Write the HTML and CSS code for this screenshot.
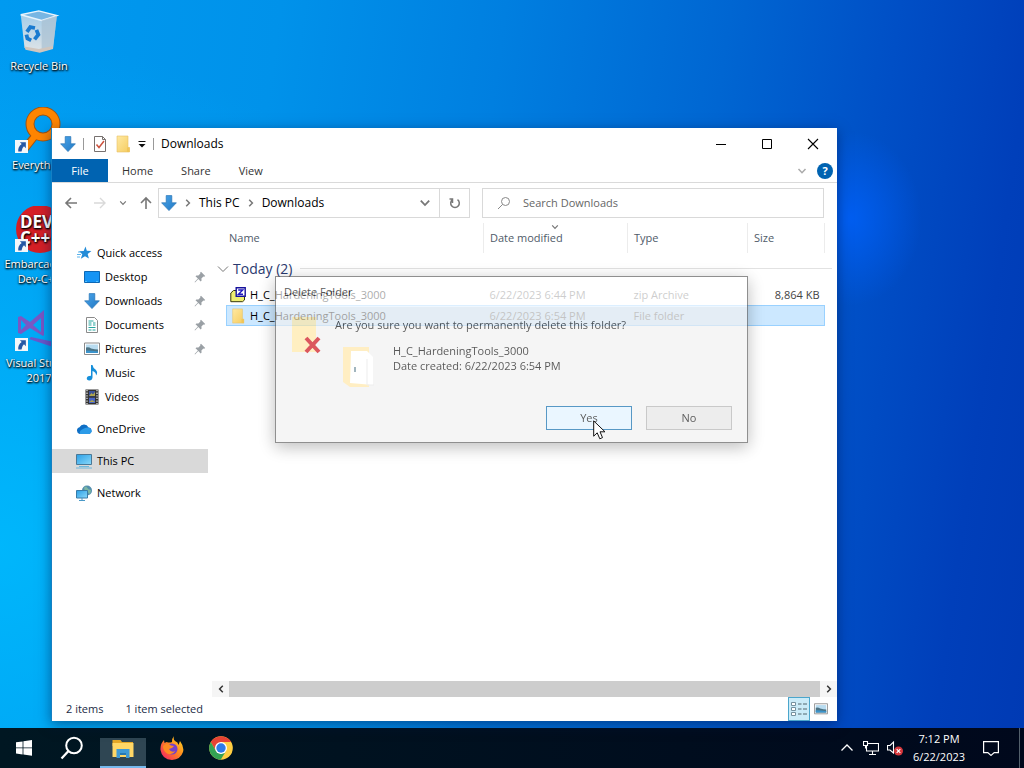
FILE: index.html
```html
<!DOCTYPE html>
<html lang="en">
<head>
<meta charset="utf-8">
<meta name="viewport" content="width=device-width, initial-scale=1">
<title>Downloads</title>
<link rel="stylesheet" href="styles.css">
</head>
<body>
<svg class="defs" aria-hidden="true">
  <defs>
    <linearGradient id="gBlue" x1="0" y1="0" x2="1" y2="1"><stop offset="0" stop-color="#4aa5ea"/><stop offset="1" stop-color="#2178c4"/></linearGradient>
    <linearGradient id="gFold" x1="0" y1="0" x2="1" y2="1"><stop offset="0" stop-color="#ffe9a2"/><stop offset="1" stop-color="#f5cc5f"/></linearGradient>
    <linearGradient id="gBin" x1="0" y1="0" x2="0" y2="1"><stop offset="0" stop-color="#9fcbe9"/><stop offset="1" stop-color="#dde3e7"/></linearGradient>
    <linearGradient id="gScreen" x1="0" y1="0" x2="1" y2="1"><stop offset="0" stop-color="#2b9fe6"/><stop offset="1" stop-color="#8ad9fa"/></linearGradient>
    <linearGradient id="gFox" x1="1" y1="0" x2="0" y2="1"><stop offset="0" stop-color="#ffe226"/><stop offset=".45" stop-color="#ff8a1e"/><stop offset="1" stop-color="#f5156c"/></linearGradient>
  </defs>
  <symbol id="down" viewBox="0 0 16 16"><path d="M5.2.6h5.6v7.2h4.6L8 15.6.6 7.800h4.600z" fill="url(#gBlue)" stroke="#2874b5" stroke-width=".7"/></symbol>
  <symbol id="folder" viewBox="0 0 16 18"><path d="M2 1h11v11.500h1.500V17H2z" fill="url(#gFold)" stroke="#e8c166" stroke-width=".6"/><path d="M12 12.500h2.500V17H12z" fill="#f0c558"/></symbol>
  <symbol id="pin" viewBox="0 0 12 12"><path d="M7 .8 11.200 5l-1 .8-.8-.2-2 2 .2 2-.9.900-2.400-2.400L1 11.500.6 11l3.300-3.400-2.400-2.300.9-.9 2 .2 2-2-.3-.8z" fill="#9aa0a5"/></symbol>
  <symbol id="picture" viewBox="0 0 16 13"><path d="M.5.500h15v11.500H.5z" fill="#fff" stroke="#8b8b8b"/><path d="M2 2h12v8.500H2z" fill="#b9dcf0"/><path d="M2 5q3-1 5 1 4 1 7 1v3.500H2z" fill="#4c7384"/><path d="M2 8q6 0 12 1v1.500H2z" fill="#3b94cc"/></symbol>
  <symbol id="link" viewBox="0 0 12 12"><path d="M0 0h12v12H0z" fill="#f4f7fa"/><path d="M4.500 2H10v5.500L8.300 5.800Q6.200 7.500 6 10.500H3Q2.500 6.500 6.200 3.700z" fill="#2557a5"/></symbol>
  <symbol id="chevron" viewBox="0 0 10 10"><path d="m1.500 3 3.500 3.700L8.500 3" fill="none" stroke="currentColor" stroke-width="1.500"/></symbol>
  <symbol id="right" viewBox="0 0 10 10"><path d="m3.200 1.800 3.200 3.200-3.200 3.200" fill="none" stroke="currentColor" stroke-width="1.500"/></symbol>
</svg>

<div class="screen">
  <main class="desktop">
    <nav class="shortcuts" aria-label="Desktop icons">
      <a class="shortcut" href="#bin">
        <svg class="ico-shortcut" viewBox="0 0 48 48"><g transform="translate(1 1) scale(.95)"><path d="M5 6 24 2l19 5-4 34q-8 4-15 3L9 41z" fill="url(#gBin)"/><path d="m5 6 19-4 19 5-16 5z" fill="#77b6e3" stroke="#e7f4fd" stroke-width="1.500"/><path d="m27 12 16-5-4 34-12 3z" fill="#a9c0d2" opacity=".7"/><path d="M9 39.500 24 42l15-3v3l-14 4-15-3z" fill="#d0c6be"/><g fill="none" stroke="#1a7bd0" stroke-width="4"><path d="m11.500 24 3.500-5 5 1"/><path d="m21.500 22 2 5-4 5"/><path d="m16 33-4-2-1-4"/></g></g></svg>
        <span>Recycle Bin</span>
      </a>
      <a class="shortcut" href="#everything">
        <svg class="ico-shortcut" viewBox="0 0 48 48"><path d="M19 30 8 44" stroke="#9d5313" stroke-width="8"/><circle cx="28" cy="17" r="13" fill="none" stroke="#9d5313" stroke-width="9"/><path d="M20 29 9 43" stroke="#ff8500" stroke-width="6"/><circle cx="28" cy="17" r="13" fill="none" stroke="#ff8500" stroke-width="7"/><use href="#link" x="0" y="33" width="13" height="13"/></svg>
        <span>Everything</span>
      </a>
      <a class="shortcut" href="#devcpp">
        <svg class="ico-shortcut" viewBox="0 0 48 48"><circle cx="25" cy="23" r="24" fill="#d51f26"/><text class="dev-mark" x="5" y="22">DEV</text><text class="dev-mark" x="5" y="38">C++</text><use href="#link" x="0" y="33" width="13" height="13"/></svg>
        <span>Embarcadero<br>Dev-C++</span>
      </a>
      <a class="shortcut" href="#vs">
        <svg class="ico-shortcut" viewBox="0 0 48 48"><path d="M29 5 15 17 6 11 3 12v16l3 1 9-6 13 8 1-1zM6 15l5 5-5 5zm20-2v14l-8-7z" fill="#7958c4" fill-rule="evenodd"/><path d="M14 34 44 44v-6L16 32z" fill="#6a57cb"/><use href="#link" x="0" y="33" width="13" height="13"/></svg>
        <span>Visual Studio<br>2017</span>
      </a>
    </nav>

    <section class="window" aria-label="Downloads">
      <header class="titlebar">
        <svg class="ico16"><use href="#down"/></svg>
        <i class="bar"></i>
        <button class="plain" aria-label="Properties"><svg class="ico16" viewBox="0 0 16 16"><path d="M2.500.500h8l3 3v12h-11z" fill="#fff" stroke="#77716f"/><path d="M10.500.500v3h3" fill="none" stroke="#77716f"/><path d="m4.500 8.500 2.500 3 5-6.500" fill="none" stroke="#cc533f" stroke-width="1.500"/></svg></button>
        <button class="plain" aria-label="New folder"><svg class="ico16 tall"><use href="#folder"/></svg></button>
        <button class="plain" aria-label="Customize toolbar"><svg class="ico8" viewBox="0 0 8 8"><path d="M.5 1.500h7" stroke="#111"/><path d="M.5 4h7L4 7.500z" fill="#111"/></svg></button>
        <i class="bar"></i>
        <h1 class="title">Downloads</h1>
        <div class="controls">
          <button class="control" aria-label="Minimize"><svg class="ico12" viewBox="0 0 12 12"><path d="M1 6.500h10" stroke="#000"/></svg></button>
          <button class="control" aria-label="Maximize"><svg class="ico12" viewBox="0 0 12 12"><path d="M1.500 1.500h9v9h-9z" fill="none" stroke="#000"/></svg></button>
          <button class="control" aria-label="Close"><svg class="ico12" viewBox="0 0 12 12"><path d="m1 1 10 10M11 1 1 11" stroke="#000" stroke-width="1.100"/></svg></button>
        </div>
      </header>

      <nav class="ribbon" aria-label="Ribbon">
        <button class="tab file">File</button>
        <button class="tab">Home</button>
        <button class="tab">Share</button>
        <button class="tab">View</button>
        <button class="plain expand" aria-label="Expand ribbon"><svg class="ico10 faint"><use href="#chevron"/></svg></button>
        <button class="help" aria-label="Help">?</button>
      </nav>

      <div class="location">
        <div class="history">
          <button class="plain" aria-label="Back"><svg class="ico14" viewBox="0 0 14 14"><path d="M13 7H2m5-5L2 7l5 5" fill="none" stroke="#777" stroke-width="1.600"/></svg></button>
          <button class="plain" aria-label="Forward" disabled><svg class="ico14" viewBox="0 0 14 14"><path d="M1 7h11M7 2l5 5-5 5" fill="none" stroke="#d9d9d9" stroke-width="1.400"/></svg></button>
          <button class="plain" aria-label="Recent locations"><svg class="ico8 grey"><use href="#chevron"/></svg></button>
          <button class="plain" aria-label="Up"><svg class="ico14" viewBox="0 0 14 14"><path d="M7 13V2M2 7l5-5 5 5" fill="none" stroke="#777" stroke-width="1.600"/></svg></button>
        </div>
        <div class="address">
          <svg class="ico16"><use href="#down"/></svg>
          <svg class="ico10 grey"><use href="#right"/></svg>
          <button class="plain">This PC</button>
          <svg class="ico10 grey"><use href="#right"/></svg>
          <button class="plain">Downloads</button>
          <button class="plain drop" aria-label="Previous locations"><svg class="ico12 grey"><use href="#chevron"/></svg></button>
          <button class="plain refresh" aria-label="Refresh"><svg class="ico14" viewBox="0 0 14 14"><path d="M9.500 3.700a4.300 4.300 0 1 1-5 0M4.500 7V3H1.500" fill="none" stroke="#777" stroke-width="1.500"/></svg></button>
        </div>
        <label class="search">
          <svg class="ico14" viewBox="0 0 14 14"><circle cx="8.500" cy="5.500" r="4" fill="none" stroke="#888"/><path d="m5.500 8.500-4.500 4.500" stroke="#888"/></svg>
          <input type="search" placeholder="Search Downloads" aria-label="Search Downloads">
        </label>
      </div>

      <div class="body">
        <nav class="tree" aria-label="Folders">
          <a class="node top" href="#quick"><svg class="ico16" viewBox="0 0 16 16"><path d="m9.500 1.500 1.300 4.300 4.600.2-3.700 3 1.200 4.600L9 11.200l-4.200 2.600 1.500-4.600L3 6.300l4.700-.4z" fill="#238cd8"/><path d="M1 9.500h4M1 12h3M2 7h2" stroke="#5db4ec"/></svg>Quick access</a>
          <a class="node" href="#desktop"><svg class="ico16" viewBox="0 0 16 16"><path d="M.5 2.500h15v11H.5z" fill="#1694f4" stroke="#0d68b5"/><path d="M1 12.500h14" stroke="#55c2ff" stroke-dasharray="2 9"/></svg>Desktop<svg class="pin"><use href="#pin"/></svg></a>
          <a class="node" href="#downloads"><svg class="ico16"><use href="#down"/></svg>Downloads<svg class="pin"><use href="#pin"/></svg></a>
          <a class="node" href="#documents"><svg class="ico16" viewBox="0 0 16 16"><path d="M2.500.500h8l3 3v12h-11z" fill="#fff" stroke="#8a8a8a"/><path d="M4.500 4h5m-5 2h3m1.500 0h2.500m-7 2h3m1.500 0h2.500m-7 2.500h7m-7 2.500h3m1 0h3" stroke="#26a6a0" stroke-width="1.200"/></svg>Documents<svg class="pin"><use href="#pin"/></svg></a>
          <a class="node" href="#pictures"><svg class="ico16"><use href="#picture"/></svg>Pictures<svg class="pin"><use href="#pin"/></svg></a>
          <a class="node" href="#music"><svg class="ico16" viewBox="0 0 16 16"><path d="M7 0h1.500q.5 3 3 4.500 3 3 .5 6 .3-3.500-3.500-4.500v6.500q-.3 2.800-3.200 3-2.800-.2-2.500-2.500.5-2.300 4.200-2.300z" fill="#168fda"/></svg>Music</a>
          <a class="node" href="#videos"><svg class="ico16" viewBox="0 0 16 16"><path d="M1.500.500h13v15h-13z" fill="#333"/><path d="M3 1v14M13 1v14" stroke="#ddd" stroke-width="1.300" stroke-dasharray="1.300 1.300"/><path d="M5 2h6v5.300H5z" fill="#3d549c"/><path d="M5 8.700h6V14H5z" fill="#4a67c7"/><path d="m5 7 2.500-3L9 5.500 11 3v4zM5 13l3-2 3 2z" fill="#b0a64d"/></svg>Videos</a>
          <a class="node top group" href="#onedrive"><svg class="ico16" viewBox="0 0 16 16"><path d="M3.800 13A3.500 3.500 0 0 1 3.500 6.200 5 5 0 0 1 12.500 6.500 3.300 3.300 0 0 1 13 13z" fill="#0f6fc5"/><path d="M4 13q-1-3 2-4.500l3-1.500q3-1.300 5.500.5 2.800 4-1.500 5.500z" fill="#2c9be8"/></svg>OneDrive</a>
          <a class="node top group current" href="#pc" aria-current="page"><svg class="ico16" viewBox="0 0 16 16"><path d="M.5 1.500h15v10H.5z" fill="url(#gScreen)" stroke="#4b7896"/><path d="M3 13.500h10M0 15h16" stroke="#6eb8dd"/></svg>This PC</a>
          <a class="node top group" href="#network"><svg class="ico16" viewBox="0 0 16 16"><circle cx="11" cy="5.500" r="5" fill="#538fae"/><path d="M8 3q2-2.500 3-.5T15 5q0 3-2 4-1-3-4-3z" fill="#7cb7a4"/><path d="M.5 5.500h11v7.500H.5z" fill="url(#gScreen)" stroke="#397ba7"/><path d="M6 13v2M3 15.500h6" stroke="#4a99c7"/></svg>Network</a>
        </nav>

        <div class="content">
          <div class="files">
            <table>
              <colgroup><col><col class="col-date"><col class="col-type"><col class="col-size"></colgroup>
              <thead>
                <tr><th scope="col">Name</th><th scope="col"><svg class="ico8 sort"><use href="#chevron"/></svg>Date modified</th><th scope="col">Type</th><th scope="col">Size</th></tr>
              </thead>
              <tbody>
                <tr><th class="today" colspan="4" scope="rowgroup"><div class="today-line"><svg class="ico12" viewBox="0 0 12 12"><path d="m1 3.500 5 5 5-5" fill="none" stroke="#777"/></svg>Today (2)</div></th></tr>
                <tr class="file-row"><td><div class="name"><svg class="ico16" viewBox="0 0 16 16"><path d="M.8 6 3.500 3.500H9L14.500 5v8l-2 1.700H.8z" fill="#eeee71" stroke="#35370e"/><path d="M6.200.800h9v8.500h-9z" fill="#fff" stroke="#16119c" stroke-width="1.400"/><path d="M8.200 3h4.500L8.500 7.200H13" fill="none" stroke="#1d17bf" stroke-width="1.400"/></svg>H_C_HardeningTools_3000</div></td><td>6/22/2023 6:44 PM</td><td>zip Archive</td><td class="size">8,864 KB</td></tr>
                <tr class="file-row selected"><td><div class="name"><svg class="ico16"><use href="#folder"/></svg>H_C_HardeningTools_3000</div></td><td>6/22/2023 6:54 PM</td><td>File folder</td><td class="size"></td></tr>
              </tbody>
            </table>
          </div>
          <div class="scroll">
            <button class="plain" aria-label="Scroll left"><svg class="ico10 flip"><use href="#right"/></svg></button>
            <div class="thumb"></div>
            <button class="plain" aria-label="Scroll right"><svg class="ico10"><use href="#right"/></svg></button>
          </div>
        </div>
      </div>

      <footer class="status">
        <span>2 items</span><span>1 item selected</span>
        <div class="views">
          <button class="view on" aria-label="Details view"><svg class="ico16" viewBox="0 0 16 16"><path d="M.5 1.500h4v3h-4zm0 5h4v3h-4zm0 5h4v3h-4z" fill="#fff" stroke="#75909e"/><path d="M7 3h3.500M12 3h4M7 8h3.500M12 8h4M7 13h3.500M12 13h4" stroke="#53666f"/></svg></button>
          <button class="view" aria-label="Large icons view"><svg class="ico14"><use href="#picture"/></svg></button>
        </div>
      </footer>
    </section>

    <section class="dialog" role="dialog" aria-labelledby="dialog-title">
      <h2 class="dialog-title" id="dialog-title">Delete Folder</h2>
      <div class="dialog-body">
        <svg class="warn" viewBox="0 0 36 40"><path d="M2 0h24v35H2z" fill="#ffe7a2"/><path d="m16 21 13 14m0-14L16 35" stroke="#c9000c" stroke-width="4"/></svg>
        <div class="dialog-text">
          <p class="question">Are you sure you want to permanently delete this folder?</p>
          <div class="item">
            <svg class="preview" viewBox="0 0 36 46"><path d="M0 4h26v40H7l-7-5z" fill="#ffe6a4"/><path d="M8 8h16l6 6v28l-23-2z" fill="#fff"/><path d="M24 16v26h7" fill="none" stroke="#e4e4e4"/><path d="M11 24h2v5h-2z" fill="#718f9d"/></svg>
            <p>H_C_HardeningTools_3000<br>Date created: 6/22/2023 6:54 PM</p>
          </div>
        </div>
      </div>
      <div class="actions"><button class="action default">Yes</button><button class="action">No</button></div>
    </section>
    <svg class="cursor" viewBox="0 0 13 20" aria-hidden="true"><path d="M.7.900v15.300l3.500-3.400 2.600 6 2.700-1.200-2.500-5.800h5z" fill="#fff" stroke="#111"/></svg>
  </main>

  <footer class="taskbar">
    <div class="apps">
      <button class="app wide" aria-label="Start"><svg class="ico16" viewBox="0 0 16 16"><path d="m0 2.300 6.600-.9v6.100H0zm7.400-1L16 .1v7.400H7.400zM0 8.300h6.600v6.200L0 13.600zm7.400 0H16v7.500l-8.600-1.200z" fill="#fff"/></svg></button>
      <button class="app wide" aria-label="Search"><svg class="ico24" viewBox="0 0 24 24"><circle cx="14" cy="9.500" r="7.800" fill="none" stroke="#fff" stroke-width="2"/><path d="m8.500 15-7 7.500" stroke="#fff" stroke-width="2.300"/></svg></button>
    </div>
    <div class="apps pinned">
      <button class="app active" aria-label="File Explorer"><svg class="ico24" viewBox="0 0 24 24"><path d="M1.500 3h8l1.500 2h11v4H1.500z" fill="#e5a827"/><path d="M1.500 6h21v14h-21z" fill="#ffd766"/><path d="M5.500 12h13v9h-3.500v-5H9v5H5.500z" fill="#3f9ad5"/><path d="M9 16h6v2H9z" fill="#2779b2"/></svg></button>
      <button class="app" aria-label="Firefox"><svg class="ico24" viewBox="0 0 24 24"><path d="M14 0q-1 3 1 5 3 1 3.500 4L20 5q4.500 6 3 11-2.500 7.500-11 8Q2 23.500.5 14 0 8 4 4l.5 3 2-1Q10 7 12 6q0-4 2-6z" fill="url(#gFox)"/><circle cx="12" cy="13" r="5.500" fill="#7541c9"/><path d="M3 10q4-4 8-.5l3 .5q-2 3-5 3 2 4 6.500 2-3.500 5-8.500 2.500Q3 15 3 10z" fill="#ff8a22"/></svg></button>
      <button class="app" aria-label="Chrome"><svg class="ico24" viewBox="0 0 24 24"><circle cx="12" cy="12" r="11.800" fill="#ffce42"/><path d="M12 12V6h10.200A11.800 11.800 0 0 0 1.800 6L7 15z" fill="#e74335"/><path d="M1.800 6a11.800 11.800 0 0 0 9.900 17.800L17 15l-5 3-5-3z" fill="#34a353"/><circle cx="12" cy="12" r="6" fill="#fff"/><circle cx="12" cy="12" r="4.700" fill="#2e7be8"/></svg></button>
    </div>
    <div class="tray">
      <button class="app small" aria-label="Show hidden icons"><svg class="ico14" viewBox="0 0 14 14"><path d="m1.500 9.500 5.500-5.500 5.500 5.500" fill="none" stroke="#fff" stroke-width="1.300"/></svg></button>
      <button class="app small" aria-label="Network"><svg class="ico16" viewBox="0 0 16 16"><path d="M5 3.500h10.500v7.500h-12V6M9.500 11v3.500M6 14.500h7M.5 1.500h4v4h-4zM2.500 5.500v3" fill="none" stroke="#fff" stroke-width="1.100"/></svg></button>
      <button class="app small" aria-label="Volume muted"><svg class="ico16" viewBox="0 0 16 16"><path d="M.5 5.500h2.500l3.500-3.500v11L3 10H.5z" fill="none" stroke="#fff" stroke-width="1.100"/><circle cx="11.500" cy="11" r="4.500" fill="#d6373c"/><path d="m9.700 9.200 3.600 3.600m0-3.600-3.600 3.600" stroke="#fff" stroke-width="1.200"/></svg></button>
      <button class="app clock"><time datetime="2023-06-22T19:12">7:12 PM<br>6/22/2023</time></button>
      <button class="app note" aria-label="Notifications"><svg class="ico16" viewBox="0 0 16 16"><path d="M.6 1.600h14.800v11h-4.200L8 15.400 4.800 12.600H.6z" fill="none" stroke="#fff" stroke-width="1.200"/></svg></button>
      <button class="peek" aria-label="Show desktop"></button>
    </div>
  </footer>
</div>
</body>
</html>
```
FILE: styles.css
```css
* { box-sizing: border-box; }
body { margin: 0; font: 11px/16px "Open Sans", "Noto Sans", sans-serif; color: #000; }
button, input { font: inherit; color: inherit; }
h1, h2, p { margin: 0; font-size: 11px; font-weight: 400; }
a { color: inherit; text-decoration: none; }
svg { display: block; flex: none; }
.defs { position: absolute; width: 0; height: 0; }

.screen { display: flex; flex-direction: column; height: 100vh; overflow: hidden; }
.desktop {
  position: relative; flex: 1; min-height: 0;
  background:
    radial-gradient(ellipse 50% 70% at 0% 75%, rgba(0, 190, 255, .8), rgba(0, 170, 255, 0)),
    radial-gradient(ellipse 7% 12% at 83% 30%, rgba(0, 98, 255, .75), rgba(0, 80, 215, 0)),
    linear-gradient(98deg, #009af0 0%, #0092ea 25%, #007fe0 45%, #0066d2 65%, #004fc6 80%, #003fba 92%, #003ab4 100%);
}

.ico8 { width: 8px; height: 8px; }
.ico10 { width: 10px; height: 10px; }
.ico12 { width: 12px; height: 12px; }
.ico14 { width: 14px; height: 14px; }
.ico16 { width: 16px; height: 16px; }
.ico24 { width: 24px; height: 24px; }
.tall { height: 18px; }
.grey { color: #777; }
.faint { color: #aaa; }
.flip { transform: scaleX(-1); }
.plain { display: flex; align-items: center; justify-content: center; padding: 0; border: 0; background: none; }

.shortcuts { display: flex; flex-direction: column; width: 78px; padding-top: 8px; }
.shortcut { display: flex; flex-direction: column; align-items: center; gap: 2px; height: 99px; color: #fff; text-align: center; line-height: 15px; text-shadow: 1px 1px 2px #000, 0 1px 2px #000; }
.ico-shortcut { width: 48px; height: 48px; }
.dev-mark { font: 700 17px "Open Sans", sans-serif; fill: #fff; }

.window {
  position: absolute; inset: 128px 187px 7px 51px;
  display: flex; flex-direction: column;
  background: #fff; border-left: 1px solid #1580c4;
  box-shadow: 0 3px 12px rgba(0, 20, 70, .5);
}
.titlebar { display: flex; align-items: center; gap: 7px; height: 31px; padding-left: 8px; }
.title { font-size: 12px; }
.bar { width: 1px; height: 12px; background: #999; }
.bar + .plain { margin-left: 1px; }
.controls { display: flex; align-self: stretch; margin-left: auto; padding-right: 1px; }
.control { display: grid; place-items: center; width: 46px; padding: 0; border: 0; background: none; }

.ribbon { display: flex; align-items: center; height: 24px; padding-right: 4px; border-bottom: 1px solid #dadada; }
.tab { height: 23px; padding: 0 14px; border: 0; background: none; color: #333; }
.tab.file { width: 56px; background: #0063b1; color: #fff; }
.expand { margin-left: auto; margin-right: 10px; }
.help { width: 16px; height: 16px; padding: 0; border: 0; border-radius: 50%; background: #0063b1; color: #fff; font-weight: 700; line-height: 16px; }

.location { display: grid; grid-template-columns: 106px 312fr 354fr; align-items: center; height: 40px; padding-right: 13px; }
.history { display: flex; align-items: center; gap: 12px; padding-left: 12px; }
.history .plain:first-child { margin-right: 3px; }
.address, .search { display: flex; align-items: center; min-width: 0; height: 30px; border: 1px solid #d9d9d9; }
.address { gap: 6px; padding-left: 2px; font-size: 12px; }
.drop { margin-left: auto; padding: 0 8px; }
.refresh { width: 30px; height: 28px; border-left: 1px solid #d9d9d9; margin-left: -6px; }
.search { gap: 12px; margin-left: 12px; padding: 0 14px; }
.search input { flex: 1; min-width: 0; padding: 0; border: 0; outline: 0; background: none; }
.search input::placeholder { color: #666; opacity: 1; }

.body { display: flex; flex: 1; min-height: 0; }
.tree { width: 156px; padding-top: 18px; }
.node { display: flex; align-items: center; gap: 5px; height: 24px; padding: 0 2px 0 32px; }
.node.top { padding-left: 24px; }
.node.group { margin-top: 8px; }
.current { background: #d9d9d9; }
.pin { width: 12px; height: 12px; margin-left: auto; }

.content { display: flex; flex: 1; flex-direction: column; min-width: 0; padding-left: 4px; }
.files { flex: 1; padding: 0 12px 0 14px; }
table { width: 100%; table-layout: fixed; border-collapse: collapse; }
.col-date { width: 144px; }
.col-type { width: 120px; }
.col-size { width: 77px; }
th, td { padding: 0 6px; font-weight: 400; text-align: left; white-space: nowrap; }
thead th { position: relative; height: 30px; border-right: 1px solid #ececec; color: #4f5b69; }
thead th:first-child { padding-left: 3px; }
.sort { position: absolute; top: 0; left: 67px; color: #777; }
.today { height: 31px; padding: 0; }
.today-line { display: flex; align-items: center; gap: 4px; margin: 0 -7px 0 -9px; color: #2a3a70; font-size: 14px; }
.today-line::after { content: ""; flex: 1; height: 1px; margin-left: 4px; background: #e2e2e2; }
.file-row td { height: 21px; color: #6d6d6d; }
.file-row td:first-child { padding-left: 4px; color: #000; }
.name { display: flex; align-items: center; gap: 4px; }
.file-row .size { padding-right: 5px; color: #444; text-align: right; }
.selected { background: #cce8ff; outline: 1px solid #99d1ff; outline-offset: -1px; }
.scroll { display: flex; height: 16px; background: #f5f5f5; color: #333; }
.scroll .plain { width: 17px; }
.thumb { flex: 1; background: #cdcdcd; }

.status { display: flex; align-items: center; gap: 22px; height: 24px; padding-left: 14px; color: #222b45; }
.views { display: flex; align-self: stretch; margin-left: auto; padding-right: 5px; }
.view { display: grid; place-items: center; width: 22px; padding: 0; border: 0; background: none; }
.view.on { border: 1px solid #4ba6cc; background: #cbebf8; }

.dialog {
  position: absolute; left: 275px; top: 276px; width: 473px;
  display: flex; flex-direction: column;
  padding-bottom: 12px; border: 1px solid #555; background: #f0f0f0;
  box-shadow: 0 4px 16px rgba(0, 0, 0, .4); opacity: .66;
}
.dialog-title { height: 30px; padding: 7px 8px; background: #fff; }
.dialog-body { display: flex; gap: 9px; padding: 10px 14px 0; }
.warn { width: 36px; height: 40px; }
.dialog-text { flex: 1; }
.item { display: flex; align-items: flex-start; gap: 14px; padding-top: 10px; line-height: 15px; }
.preview { width: 36px; height: 46px; margin-left: 8px; }
.actions { display: flex; justify-content: flex-end; gap: 14px; padding: 17px 15px 0 0; }
.action { width: 86px; height: 24px; padding: 0; border: 1px solid #adadad; background: #e4e4e4; }
.action.default { border-color: #0063a8; background: #e0f2ff; }
.cursor { position: absolute; left: 593px; top: 420px; width: 13px; height: 20px; }

.taskbar { display: flex; align-items: stretch; height: 40px; background: linear-gradient(90deg, #001722, #00081c); color: #fff; }
.apps { display: flex; }
.pinned { gap: 3px; margin-left: 4px; }
.app { display: grid; place-items: center; width: 46px; padding: 0; border: 0; background: none; color: #fff; }
.app.wide { width: 48px; }
.app.active { margin-top: 10px; height: 30px; background: #2f4653; border-bottom: 2px solid #76b9ed; }
.pinned .app.active svg { margin-top: -6px; }
.tray { display: flex; margin-left: auto; }
.app.small { width: 24px; }
.clock { width: 64px; line-height: 18px; }
.app.note { width: 40px; }
.peek { width: 5px; margin-left: 8px; padding: 0; border: 0; border-left: 1px solid #53606c; background: none; }
```
